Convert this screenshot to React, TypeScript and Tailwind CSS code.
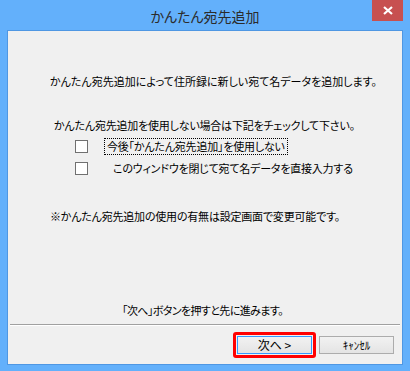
import React from 'react';

const jp = "font-['Meiryo_UI','Noto_Sans_CJK_JP',sans-serif] [font-feature-settings:'palt']";

function CheckRow({ label, focused, gap }: { label: string; focused?: boolean; gap: string }) {
  return (
    <div className="flex items-center h-[17px] ml-[67px]">
      <span className="w-[13px] h-[13px] bg-white border border-[#707070] shrink-0" />
      <span
        className={`${gap} h-[17px] flex items-center px-[2px] leading-none ${
          focused ? 'border border-dotted border-black' : 'border border-transparent'
        }`}
      >
        {label}
      </span>
    </div>
  );
}

export default function App() {
  return (
    <div className={`w-[410px] h-[371px] bg-[#63b0fb] flex flex-col ${jp} text-black whitespace-nowrap`}>
      {/* Title bar */}
      <div className="relative h-[30px] flex items-center justify-center shrink-0">
        <span className="text-[14px] text-[#2b2b2b] leading-none mt-[2px]">かんたん宛先追加</span>
        <button className="absolute top-0 right-[7px] w-[31px] h-[21px] bg-[#c75050] flex items-center justify-center">
          <svg width="10" height="9" viewBox="0 0 10 9">
            <path d="M1 1 L9 8 M9 1 L1 8" stroke="white" strokeWidth="2.2" />
          </svg>
        </button>
      </div>

      {/* Client area */}
      <div className="ml-[7px] mr-[7px] h-[335px] bg-[#f0f0f0] border border-[#4f97e3] text-[11px] leading-[16px] tracking-[-0.2px] flex flex-col">
        <p className="mt-[42px] ml-[42px] tracking-normal">かんたん宛先追加によって住所録に新しい宛て名データを追加します。</p>
        <p className="mt-[28px] ml-[46px]">かんたん宛先追加を使用しない場合は下記をチェックして下さい。</p>
        <div className="mt-[5px]">
          <CheckRow label="今後「かんたん宛先追加」を使用しない" focused gap="ml-[16px]" />
        </div>
        <div className="mt-[5px]">
          <CheckRow label="このウィンドウを閉じて宛て名データを直接入力する" gap="ml-[22px]" />
        </div>
        <p className="mt-[31px] ml-[42px]">※かんたん宛先追加の使用の有無は設定画面で変更可能です。</p>
        <p className="mt-[78px] ml-[114px] tracking-[-0.6px]">「次へ」ボタンを押すと先に進みます。</p>

        <div className="mt-[6px] mx-[2px] h-[2px] border-t border-[#a0a0a0] border-b border-b-white" />

        <div className="mt-[6px] flex items-center justify-end mr-[8px] gap-[3px] tracking-normal">
          <div className="border-[3px] border-[#ff0000] rounded-[3px] p-px">
            <button className="w-[75px] h-[18px] border border-[#3399ff] bg-gradient-to-b from-[#f2f2f2] to-[#e4e4e4] text-[12px] leading-none flex items-center justify-center">
              次へ &gt;
            </button>
          </div>
          <button className="w-[75px] h-[18px] border border-[#acacac] bg-gradient-to-b from-[#f2f2f2] to-[#e4e4e4] text-[11px] leading-none flex items-center justify-center">
            ｷｬﾝｾﾙ
          </button>
        </div>
      </div>
    </div>
  );
}
